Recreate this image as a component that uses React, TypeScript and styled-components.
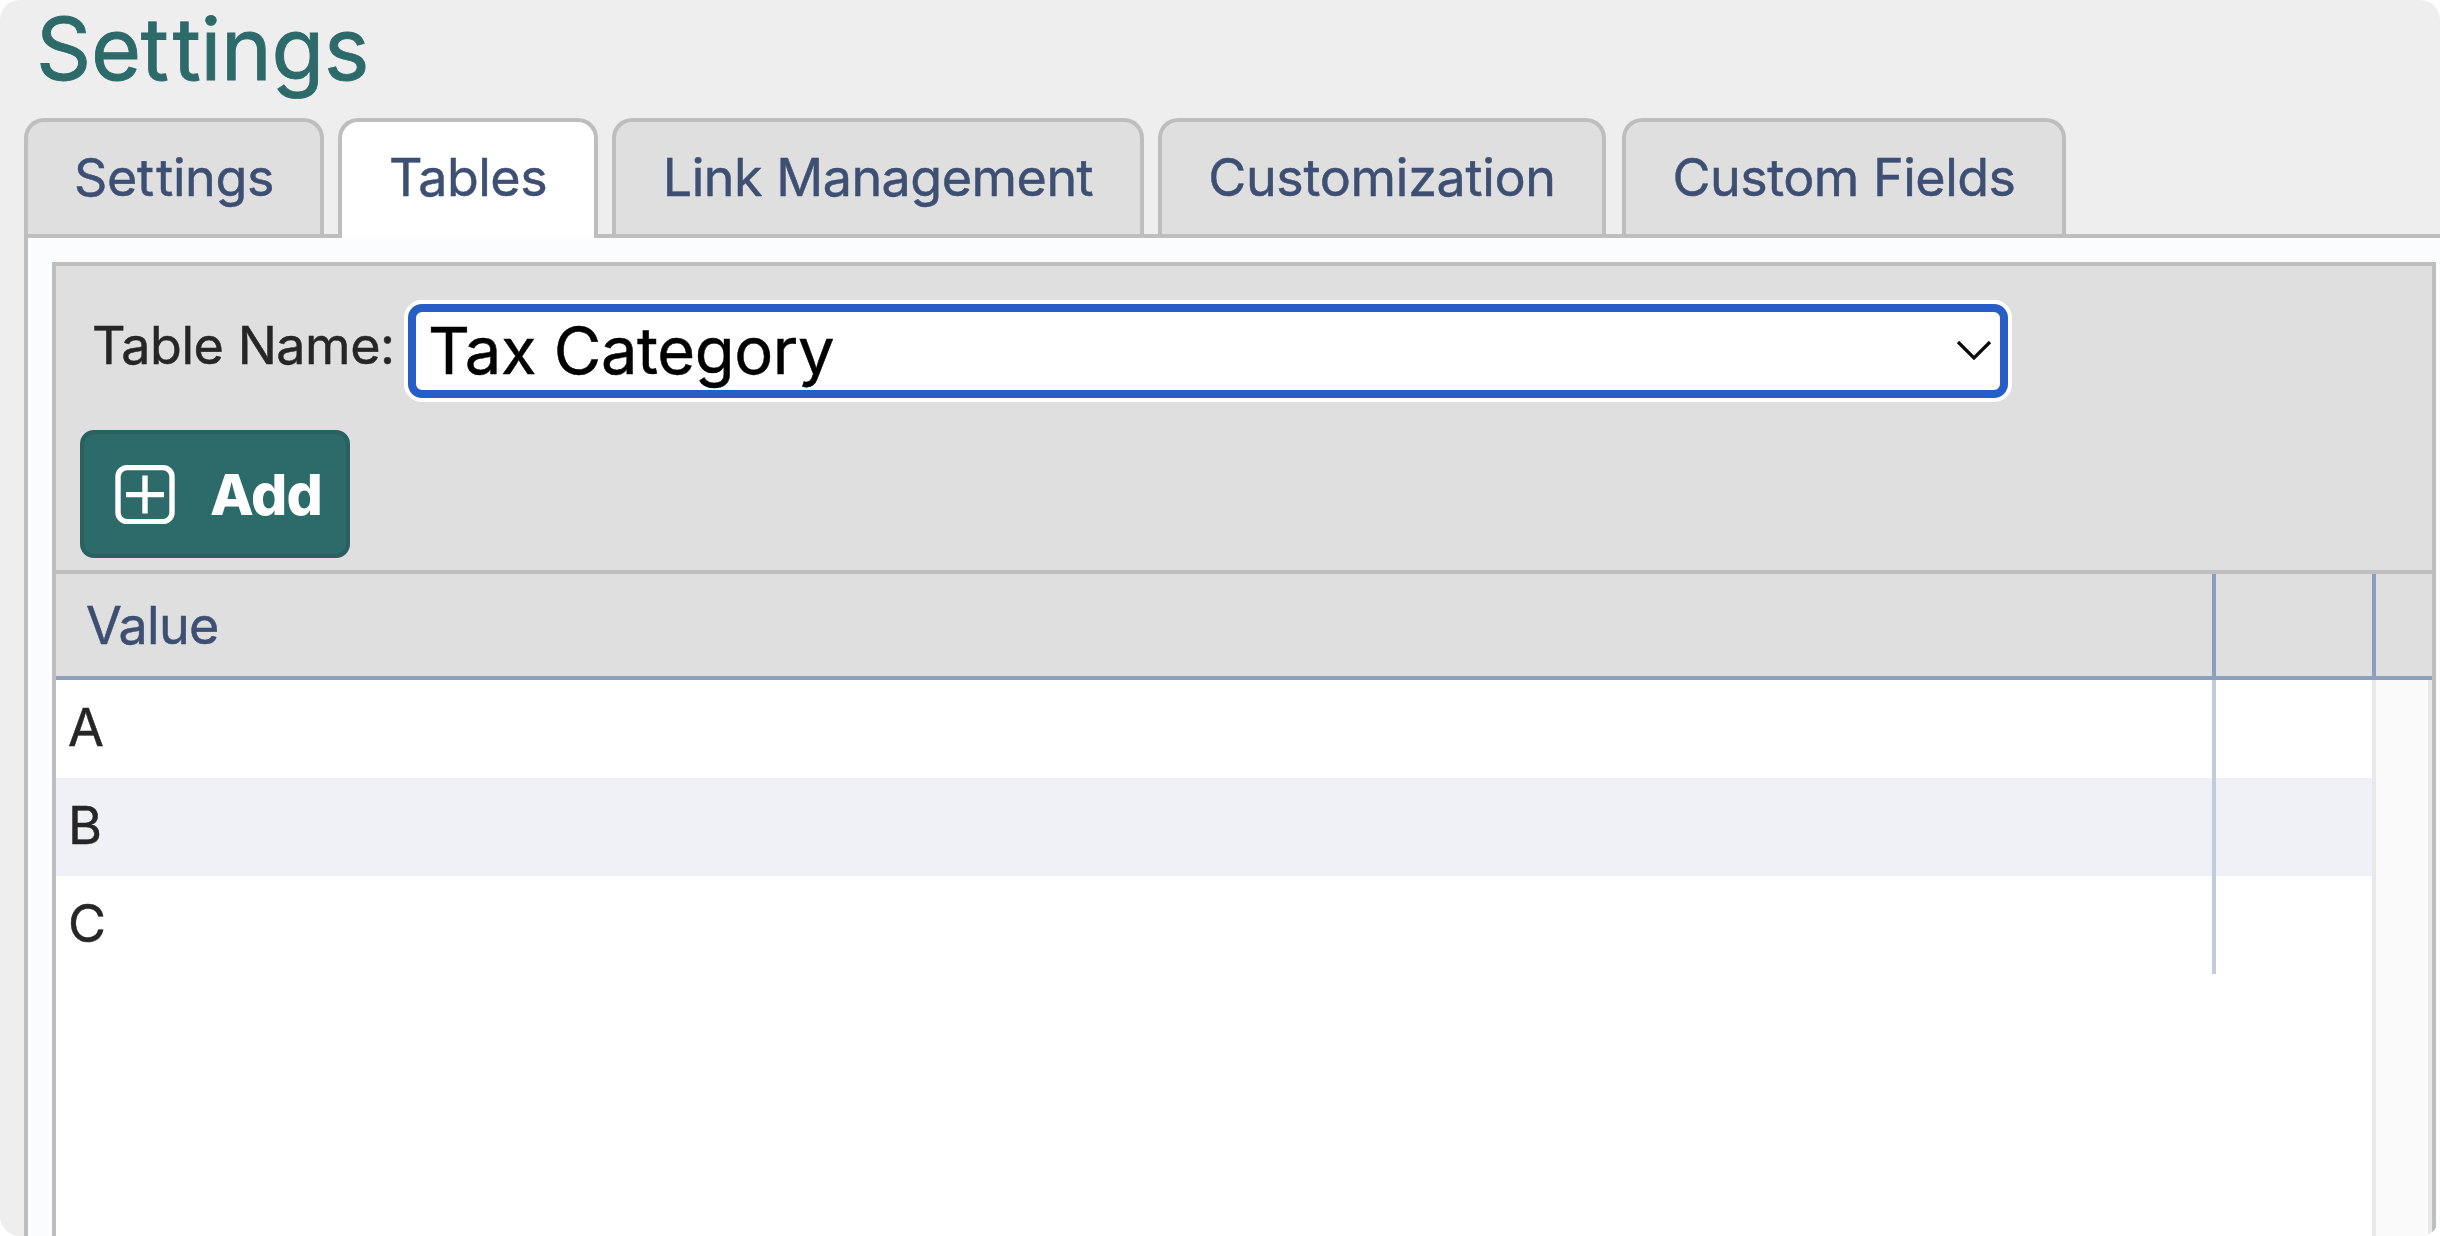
import React from "react";
import styled, { createGlobalStyle } from "styled-components";

const GlobalStyle = createGlobalStyle`
  * { box-sizing: border-box; }
  html, body { margin: 0; background: #ffffff; }
  body {
    font-family: Inter, "Liberation Sans", sans-serif;
    font-size: 52px;
    letter-spacing: -0.45px;
    color: #262626;
    -webkit-text-stroke: 0.5px currentColor;
  }
`;

const Page = styled.main`
  display: flex;
  flex-direction: column;
  width: 2440px;
  height: 1236px;
  overflow: hidden;
  border-radius: 20px;
  background: #eeeeee;
`;

const Title = styled.h1`
  margin: 0;
  height: 118px;
  padding: 0 0 0 36px;
  font-size: 86px;
  font-weight: 400;
  line-height: 98px;
  letter-spacing: -0.3px;
  color: #2d6a6a;
  -webkit-text-stroke-width: 0.9px;
`;

/* Opens up the tight double-t pair. */
const Loose = styled.span`
  letter-spacing: 0.045em;
`;

const TabList = styled.nav`
  display: flex;
  height: 116px;
  margin-left: 24px;
`;

const Tab = styled.a<{
  $width: number;
  $gap: number;
  $active?: boolean;
  $spacing?: number;
}>`
  position: relative;
  width: ${(p) => p.$width}px;
  height: ${(p) => (p.$active ? 120 : 116)}px;
  margin-right: ${(p) => p.$gap}px;
  border: 4px solid #bebebe;
  border-bottom: 0;
  border-radius: 20px 20px 0 0;
  background: ${(p) => (p.$active ? "#ffffff" : "#dfdfdf")};
  color: #3d4f73;
  letter-spacing: ${(p) => p.$spacing ?? -0.5}px;
  line-height: 112px;
  text-align: center;
  white-space: nowrap;
`;

const TabBody = styled.section`
  display: flex;
  flex: 1;
  margin-left: 24px;
  padding: 24px 4px 0 24px;
  border: solid #bebebe;
  border-width: 4px 0 0 4px;
  background: #fafcfe;
`;

const Panel = styled.div`
  display: flex;
  flex: 1;
  flex-direction: column;
  border: 4px solid #bebebe;
  border-bottom: 0;
  background: #ffffff;
`;

const Toolbar = styled.div`
  display: flex;
  flex-direction: column;
  align-items: flex-start;
  height: 308px;
  padding: 34px 0 0 24px;
  border-bottom: 4px solid #bebebe;
  background: #dfdfdf;
`;

const Field = styled.div`
  display: flex;
  align-items: flex-start;
  height: 130px;
`;

const Label = styled.label`
  width: 324px;
  padding-left: 12px;
  line-height: 92px;
  white-space: nowrap;
`;

const SelectBox = styled.div`
  display: grid;
  width: 1608px;
  height: 102px;
  border: 4px solid #ffffff;
  border-radius: 18px;
  background: #ffffff;
  > * { grid-area: 1 / 1; }
`;

const Select = styled.select`
  appearance: none;
  width: 100%;
  height: 94px;
  margin: 0;
  padding: 0 0 0 12px;
  border: 8px solid #285dc6;
  border-radius: 14px;
  background: #ffffff;
  color: #000000;
  font-family: inherit;
  font-size: 65px;
  letter-spacing: -0.4px;
  line-height: 78px;
  outline: none;
`;

const Chevron = styled.svg`
  width: 36px;
  height: 22px;
  margin: 36px 16px 0 0;
  justify-self: end;
  pointer-events: none;
`;

const AddButton = styled.button`
  display: flex;
  align-items: center;
  width: 270px;
  height: 128px;
  padding: 0 0 0 31px;
  border: 4px solid #296060;
  border-radius: 14px;
  background: #2d6a6a;
  color: #ffffff;
  font-family: inherit;
  font-size: 57px;
  font-weight: 800;
  letter-spacing: -1px;
  -webkit-text-stroke-width: 0;
  svg { width: 60px; height: 60px; }
`;

const AddText = styled.span`
  margin-left: 35px;
  padding-top: 2px;
  line-height: 118px;
`;

const Columns = styled.div`
  display: grid;
  grid-template-columns: 2160px 160px 1fr;
`;

const HeadRow = styled(Columns)`
  height: 106px;
  border-bottom: 4px solid #8f9fbb;
  background: #dfdfdf;
`;

const HeadCell = styled.div`
  padding-left: 30px;
  line-height: 104px;
  letter-spacing: -0.7px;
  color: #3d4f73;
  &:not(:last-child) { border-right: 4px solid #8f9fbb; }
`;

const Body = styled.div`
  display: flex;
  flex: 1;
`;

const Rows = styled.div`
  flex: 1;
`;

const Row = styled.div<{ $striped: boolean }>`
  display: flex;
  height: 98px;
  background: ${(p) => (p.$striped ? "#f0f1f6" : "#ffffff")};
`;

const Cell = styled.div`
  width: 2160px;
  padding-left: 12px;
  border-right: 4px solid #c1ccdf;
  line-height: 96px;
`;

const ScrollTrack = styled.div`
  width: 60px;
  border: solid #e8e8e8;
  border-width: 0 4px;
  background: #fafafa;
`;

const SettingsWord = () => (
  <>
    Se<Loose>t</Loose>tings
  </>
);

const tabs = [
  { id: "settings", label: <SettingsWord />, width: 300, gap: 14, spacing: -0.4 },
  { id: "tables", label: "Tables", width: 260, gap: 14, active: true },
  { id: "links", label: "Link Management", width: 532, gap: 14 },
  { id: "customization", label: "Customization", width: 448, gap: 16, spacing: -0.3 },
  { id: "fields", label: "Custom Fields", width: 444, gap: 0 },
];

const values = ["A", "B", "C"];

export default function App() {
  return (
    <>
      <GlobalStyle />
      <Page>
        <Title>
          <SettingsWord />
        </Title>
        <TabList>
          {tabs.map((t) => (
            <Tab
              key={t.id}
              $width={t.width}
              $gap={t.gap}
              $active={t.active}
              $spacing={t.spacing}
            >
              {t.label}
            </Tab>
          ))}
        </TabList>
        <TabBody>
          <Panel>
            <Toolbar>
              <Field>
                <Label htmlFor="table-name">Table Name:</Label>
                <SelectBox>
                  <Select id="table-name" defaultValue="tax">
                    <option value="tax">Tax Category</option>
                  </Select>
                  <Chevron viewBox="0 0 36 22" fill="none" stroke="#0a0a0a" strokeWidth="3.2">
                    <path d="M2 2 L18 18 L34 2" />
                  </Chevron>
                </SelectBox>
              </Field>
              <AddButton>
                <svg viewBox="0 0 60 60" fill="none" stroke="#ffffff" strokeWidth="5.4">
                  <rect x="3" y="3.6" width="54" height="54" rx="9" />
                  <path d="M30 11.6 V49.6 M11 30.6 H49" />
                </svg>
                <AddText>Add</AddText>
              </AddButton>
            </Toolbar>
            <HeadRow>
              <HeadCell>Value</HeadCell>
              <HeadCell />
              <HeadCell />
            </HeadRow>
            <Body>
              <Rows>
                {values.map((v, i) => (
                  <Row key={v} $striped={i % 2 === 1}>
                    <Cell>{v}</Cell>
                  </Row>
                ))}
              </Rows>
              <ScrollTrack />
            </Body>
          </Panel>
        </TabBody>
      </Page>
    </>
  );
}
